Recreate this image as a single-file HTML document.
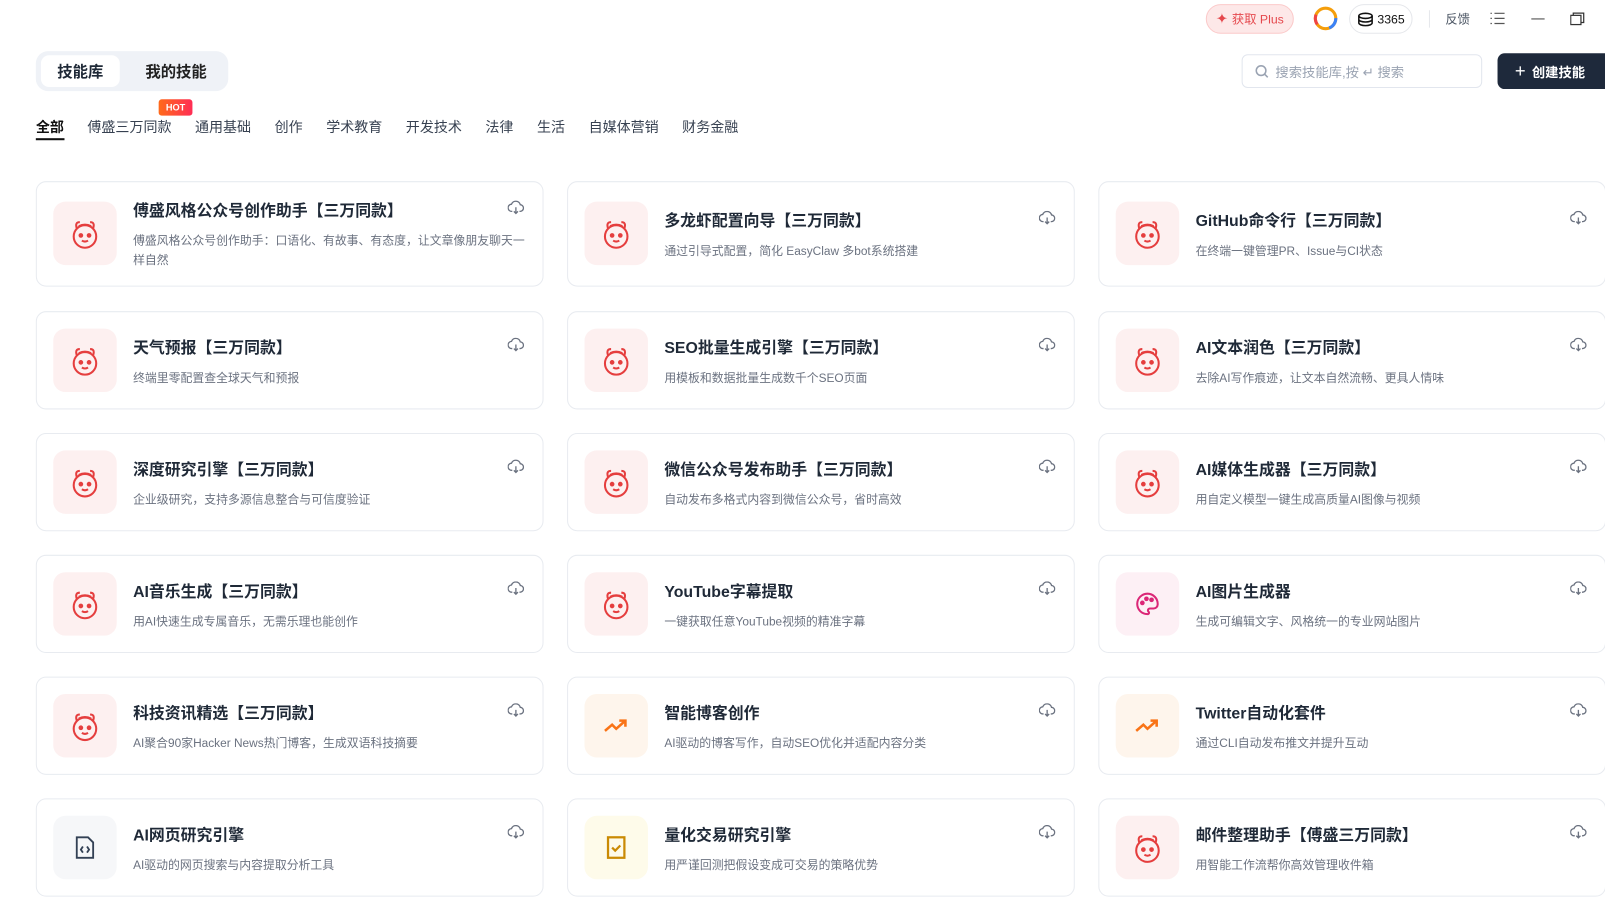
<!DOCTYPE html>
<html><head><meta charset="utf-8"><style>
*{box-sizing:border-box;margin:0;padding:0}
body{width:1605px;height:897px;overflow:hidden;background:#fff;font-family:"Liberation Sans","Noto Sans CJK SC",sans-serif;color:#1f2937;position:relative}
#w{position:absolute;left:0;top:0;width:1568px;height:876px;transform:scale(1.0236);transform-origin:0 0}
.abs{position:absolute}
.plus{left:1178px;top:4px;width:86px;height:29px;border-radius:15px;background:#fde8e8;border:1px solid #fbcaca;color:#e5484d;font-size:12px;display:flex;align-items:center;justify-content:center;gap:4px}
.coin{left:1318px;top:4px;width:62px;height:29px;border-radius:15px;border:1px solid #e5e7eb;font-size:12px;display:flex;align-items:center;justify-content:center;gap:4px;color:#111}
.tabs{left:35px;top:50px;width:188px;height:39px;background:#eff2f7;border-radius:12px}
.tab1{left:40px;top:54px;width:77px;height:31px;background:#fff;border-radius:8px;font-size:15px;font-weight:bold;display:flex;align-items:center;justify-content:center}
.tab2{left:128px;top:54px;width:88px;height:31px;font-size:15px;font-weight:bold;display:flex;align-items:center;justify-content:center;color:#222}
.search{left:1213px;top:53px;width:235px;height:33px;border:1px solid #e2e6ee;border-radius:6px;font-size:13px;color:#9aa3b2;display:flex;align-items:center;padding-left:12px;gap:6px}
.create{left:1463px;top:52px;width:150px;height:35px;background:#1e293b;border-radius:7px;color:#fff;font-size:13px;font-weight:bold;display:flex;align-items:center;padding-left:17px;gap:6px}
.cats{left:35px;top:113px;font-size:13.7px;color:#374151;display:flex}
.cats span{margin-right:23px}
.hot{left:155px;top:97px;width:33px;height:16px;border-radius:3px;background:linear-gradient(90deg,#ff6a1a,#ff2d55);color:#fff;font-size:9px;font-weight:bold;text-align:center;line-height:16px}
.card{position:absolute;width:496px;border:1px solid #e8ebf0;border-radius:10px;background:#fff}
.ic{position:absolute;left:16px;width:62px;height:62px;border-radius:12px;display:flex;align-items:center;justify-content:center}
.t{position:absolute;left:94px;font-size:15.5px;font-weight:bold;color:#1f2937;white-space:nowrap}
.d{position:absolute;left:94px;font-size:11.6px;color:#6b7280;line-height:19px;width:385px}
.dl{position:absolute;right:18px;top:18px}
</style></head><body><div id="w">
<div class="abs plus"><span style="font-size:14px">✦</span>获取 Plus</div>
<svg class="abs" style="left:1282px;top:5px" width="26" height="26" viewBox="0 0 26 26"><circle cx="13" cy="13" r="10" fill="none" stroke="#f59e0b" stroke-width="3"/><circle cx="13" cy="13" r="10" fill="none" stroke="#3b82f6" stroke-width="3" stroke-dasharray="12 50"/><circle cx="13" cy="13" r="10" fill="none" stroke="#ef4444" stroke-width="3" stroke-dasharray="10 50" stroke-dashoffset="-25"/></svg>
<div class="abs coin"><svg width="16" height="14" viewBox="0 0 16 14"><ellipse cx="8" cy="3.5" rx="6.5" ry="2.5" fill="none" stroke="#111" stroke-width="1.5"/><path d="M1.5 3.5v7c0 1.4 2.9 2.5 6.5 2.5s6.5-1.1 6.5-2.5v-7M1.5 7c0 1.4 2.9 2.5 6.5 2.5s6.5-1.1 6.5-2.5" fill="none" stroke="#111" stroke-width="1.5"/></svg>3365</div>
<div class="abs" style="left:1396px;top:10px;width:1px;height:17px;background:#e5e7eb"></div>
<div class="abs" style="left:1412px;top:10px;font-size:12px;color:#4b5563">反馈</div>
<svg class="abs" style="left:1456px;top:12px" width="14" height="12"><path d="M0 1h1.5M4 1h10M0 6h1.5M4 6h10M0 11h1.5M4 11h10" stroke="#555" stroke-width="1.2"/></svg>
<div class="abs" style="left:1496px;top:18px;width:13px;height:1px;background:#444"></div>
<svg class="abs" style="left:1534px;top:12px" width="14" height="13"><rect x="0.5" y="3" width="10" height="9" fill="none" stroke="#333" stroke-width="1.2"/><path d="M3 3V0.8h10.2V10H10.5" fill="none" stroke="#333" stroke-width="1.2"/></svg>
<div class="abs tabs"></div><div class="abs tab1">技能库</div><div class="abs tab2">我的技能</div>
<div class="abs search"><svg width="14" height="14"><circle cx="6" cy="6" r="4.7" fill="none" stroke="#9aa3b2" stroke-width="1.5"/><path d="M9.5 9.5l3 3" stroke="#9aa3b2" stroke-width="1.5"/></svg>搜索技能库,按 ↵ 搜索</div>
<div class="abs create"><span style="font-size:18px;font-weight:normal">+</span>创建技能</div>
<div class="abs hot">HOT</div>
<div class="abs cats"><span style="color:#111;font-weight:bold">全部</span><span>傅盛三万同款</span><span>通用基础</span><span>创作</span><span>学术教育</span><span>开发技术</span><span>法律</span><span>生活</span><span>自媒体营销</span><span>财务金融</span></div>
<div class="abs" style="left:35px;top:135px;width:28px;height:2px;background:#111"></div>
<div id="g"></div>
</div>
<script>
const M='<svg width="34" height="34" viewBox="0 0 34 34" fill="none" stroke="#e53e3e" stroke-width="2"><circle cx="17" cy="20" r="11"/><path d="M9 12q-2-6 3-6M25 12q2-6-3-6M11 10q6-3 12 0"/><circle cx="13" cy="19" r="1.3" fill="#e53e3e"/><circle cx="21" cy="19" r="1.3" fill="#e53e3e"/><path d="M14 24q3 2 6 0"/></svg>';
const TR='<svg width="26" height="20" viewBox="0 0 26 20" fill="none" stroke="#f97316" stroke-width="2.5"><path d="M2 15l7-6 4 4 9-8M16 5h6v6"/></svg>';
const CODE='<svg width="22" height="24" viewBox="0 0 22 24" fill="none" stroke="#334155" stroke-width="1.8"><path d="M3 2h11l5 5v15H3z"/><path d="M9 11l-2 3 2 3M13 11l2 3-2 3"/></svg>';
const CHK='<svg width="20" height="24" viewBox="0 0 20 24" fill="none" stroke="#ca8a04" stroke-width="2.2"><rect x="2" y="2" width="16" height="20"/><path d="M6 12l3 3 5-5"/></svg>';
const PAL='<svg width="26" height="26" viewBox="0 0 26 26" fill="none" stroke="#db2777" stroke-width="2"><path d="M13 3a10 10 0 1 0 0 20c1.5 0 2-1.5 1-2.5s-.5-3 1.5-3H19a4 4 0 0 0 4-4A10 10 0 0 0 13 3z"/><circle cx="8" cy="12" r="1.3" fill="#db2777"/><circle cx="12" cy="8" r="1.3" fill="#db2777"/><circle cx="17" cy="9" r="1.3" fill="#db2777"/></svg>';
const R=['#fdf0f0',M],O=['#fef5ec',TR],G=['#f6f7f9',CODE],Y=['#fefbea',CHK],P=['#fdf0f5',PAL];
const data=[
[R,'傅盛风格公众号创作助手【三万同款】','傅盛风格公众号创作助手：口语化、有故事、有态度，让文章像朋友聊天一样自然'],
[R,'多龙虾配置向导【三万同款】','通过引导式配置，简化 EasyClaw 多bot系统搭建'],
[R,'GitHub命令行【三万同款】','在终端一键管理PR、Issue与CI状态'],
[R,'天气预报【三万同款】','终端里零配置查全球天气和预报'],
[R,'SEO批量生成引擎【三万同款】','用模板和数据批量生成数千个SEO页面'],
[R,'AI文本润色【三万同款】','去除AI写作痕迹，让文本自然流畅、更具人情味'],
[R,'深度研究引擎【三万同款】','企业级研究，支持多源信息整合与可信度验证'],
[R,'微信公众号发布助手【三万同款】','自动发布多格式内容到微信公众号，省时高效'],
[R,'AI媒体生成器【三万同款】','用自定义模型一键生成高质量AI图像与视频'],
[R,'AI音乐生成【三万同款】','用AI快速生成专属音乐，无需乐理也能创作'],
[R,'YouTube字幕提取','一键获取任意YouTube视频的精准字幕'],
[P,'AI图片生成器','生成可编辑文字、风格统一的专业网站图片'],
[R,'科技资讯精选【三万同款】','AI聚合90家Hacker News热门博客，生成双语科技摘要'],
[O,'智能博客创作','AI驱动的博客写作，自动SEO优化并适配内容分类'],
[O,'Twitter自动化套件','通过CLI自动发布推文并提升互动'],
[G,'AI网页研究引擎','AI驱动的网页搜索与内容提取分析工具'],
[Y,'量化交易研究引擎','用严谨回测把假设变成可交易的策略优势'],
[R,'邮件整理助手【傅盛三万同款】','用智能工作流帮你高效管理收件箱']];
const xs=[35,554,1073],ys=[177,304,423,542,661,780];
const DL='<svg width="16" height="14" viewBox="0 0 16 14" fill="none" stroke="#6b7280" stroke-width="1.3"><path d="M4.5 10.5H4a3.5 3.5 0 0 1-.3-7A4.5 4.5 0 0 1 12.3 4 3.2 3.2 0 0 1 12 10.5h-.5M8 6.5v6M6 10.5l2 2 2-2"/></svg>';
let h='';
data.forEach((d,i)=>{const r=Math.floor(i/3),c=i%3,H=r==0?103:96;
let tT=r==0&&c==0?16:26,dT=r==0&&c==0?48:58;if(r>0){tT=23;dT=55}
h+=`<div class="card" style="left:${xs[c]}px;top:${ys[r]}px;height:${H}px"><div class="ic" style="top:${r==0?19:16}px;background:${d[0][0]}">${d[0][1]}</div><div class="t" style="top:${tT}px">${d[1]}</div><div class="d" style="top:${dT}px">${d[2]}</div><div class="dl" style="top:${r==0&&c==0?18:r==0?28:25}px">${DL}</div></div>`;});
document.getElementById('g').innerHTML=h;
</script>
</body></html>
